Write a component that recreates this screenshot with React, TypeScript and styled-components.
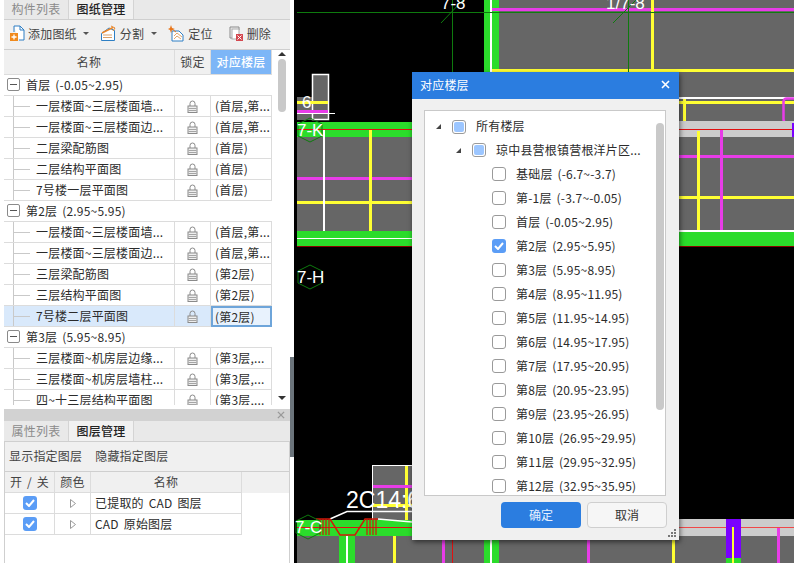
import React from "react";
import styled, { createGlobalStyle } from "styled-components";

const Global = createGlobalStyle`
  html, body { margin: 0; padding: 0; background: #fff; }
  * { box-sizing: border-box; }
  body { font-family: "Noto Sans CJK SC", "Liberation Sans", sans-serif; font-size: 12px; color: #2b2b2b; letter-spacing: .2px; word-spacing: 2px; }
`;

const Page = styled.div`
  position: relative; display: flex; width: 794px; height: 563px; overflow: hidden; background: #fff;
`;
const Side = styled.aside`
  display: flex; flex-direction: column; width: 286px; margin-left: 4px; flex: none;
`;
const Splitter = styled.div`
  width: 4px; flex: none; display: flex; flex-direction: column; padding-top: 357px;
  &::before { content: ""; display: block; height: 100px; background: #6b747b; }
`;
const Tabs = styled.div`
  display: flex; height: ${p => p.$h}px; flex: none; background: #e9e9e9; border-bottom: 1px solid #cfcfcf;
`;
const Tab = styled.div`
  width: 65px; display: flex; align-items: center; justify-content: center; border-right: 1px solid #d4d4d4; padding-bottom: 2px;
  color: ${p => (p.$active ? "#222" : "#8b8b8b")};
  font-weight: ${p => (p.$active ? 500 : 400)};
  background: ${p => (p.$active ? "#f1f1f1" : "transparent")};
`;
const Toolbar = styled.div`
  display: flex; align-items: center; gap: 11px; height: 30px; flex: none; padding: 0 0 2px 5px;
  background: #f0f0f0; border-bottom: 1px solid #cfcfcf; color: #444;
`;
const Tool = styled.div`
  display: flex; align-items: center; gap: ${p => p.$gap || 3}px;
  &:last-child { margin-left: 4px; }
`;
const Caret = styled.span`
  width: 0; height: 0; margin-left: 3px; border: 3px solid transparent; border-top: 3px solid #555; border-bottom: 0;
`;
const TableWrap = styled.div`
  display: flex; height: 355px; flex: none; overflow: hidden; background: #fff;
`;
const Table = styled.div`
  width: 268px; flex: none; display: flex; flex-direction: column;
`;
const Row = styled.div`
  display: grid; grid-template-columns: 171px 36px 61px; height: 21px; flex: none;
  background: ${p => (p.$selected ? "#d9e9fb" : "#fff")};
`;
const HeadRow = styled(Row)`
  height: 25px; background: #f0f0f0;
`;
const HeadCell = styled.div`
  display: flex; align-items: center; justify-content: center; border-right: 1px solid #dcdcdc; border-bottom: 1px solid #dcdcdc; padding-bottom: 2px;
  color: ${p => (p.$accent ? "#fff" : "#444")};
  background: ${p => (p.$accent ? "#7db6f7" : "transparent")};
  font-weight: ${p => (p.$accent ? 500 : 400)};
`;
const GroupRow = styled.div`
  display: flex; align-items: center; gap: 6px; height: 21px; flex: none; padding: 0 0 2px 3px;
  border-bottom: 1px solid #dcdcdc; background: #fff;
`;
const Minus = styled.span`
  width: 13px; height: 13px; flex: none; border: 1px solid #8a8a8a; border-radius: 2px; display: flex; align-items: center; justify-content: center;
  &::before { content: ""; width: 7px; height: 1px; background: #555; }
`;
const NameCell = styled.div`
  display: flex; align-items: center; padding: 0 0 2px 32px; white-space: nowrap; overflow: hidden;
  border-right: 1px solid #dcdcdc; border-bottom: 1px solid #dcdcdc;
  background-image: linear-gradient(#c9c9c9, #c9c9c9), linear-gradient(#c9c9c9, #c9c9c9);
  background-size: 1px 100%, 17px 1px;
  background-position: 9px 0, 9px 10px;
  background-repeat: no-repeat;
`;
const LockCell = styled.div`
  display: flex; align-items: center; justify-content: center; border-right: 1px solid #dcdcdc; border-bottom: 1px solid #dcdcdc;
`;
const FloorCell = styled.div`
  display: flex; align-items: center; padding: 0 0 2px ${p => (p.$focus ? 2 : 4)}px; white-space: nowrap; overflow: hidden;
  border-right: 1px solid #dcdcdc; border-bottom: 1px solid #dcdcdc;
  ${p => p.$focus && "border: 2px solid #6ea5da; padding-bottom: 0; background: #e8f2fd;"}
`;
const VScroll = styled.div`
  width: 18px; flex: none; background: #fff; display: flex; flex-direction: column; align-items: center; padding-left: 2px;
`;
const ArrowUp = styled.span`
  width: 0; height: 0; margin-top: 2px; border: 4px solid transparent; border-bottom: 4px solid #333; border-top: 0;
`;
const ArrowDown = styled.span`
  width: 0; height: 0; margin-top: 284px; border: 4px solid transparent; border-top: 4px solid #333; border-bottom: 0;
`;
const Thumb = styled.span`
  width: 8px; height: 53px; margin-top: 3px; border-radius: 4px; background: #c9c9c9;
`;
const Gap = styled.div`height: 4px; flex: none;`;
const PanelBar = styled.div`
  height: 12px; flex: none; background: #d2d2d2; display: flex; align-items: center; justify-content: flex-end; padding-right: 5px;
`;
const Lower = styled.div`
  flex: 1; background: #fff; border-left: 1px solid #cfcfcf; border-right: 1px solid #cfcfcf;
`;
const LowerBar = styled.div`
  display: flex; align-items: center; gap: 13px; height: 30px; padding: 0 0 2px 4px; background: #f0f0f0; border-bottom: 1px solid #cfcfcf; color: #444;
`;
const LayerGrid = styled.div`
  display: grid; grid-template-columns: 50px 36px 151px; width: 237px;
`;
const LayerHeadBand = styled.div`
  background: #f0f0f0; height: 21px;
`;
const LayerHead = styled.div`
  display: grid; grid-template-columns: 50px 36px 151px; width: 237px; height: 21px; color: #444; border-bottom: 1px solid #dcdcdc;
`;
const LayerHeadCell = styled.div`
  display: flex; align-items: center; justify-content: center; border-right: 1px solid #dcdcdc; padding-bottom: 2px;
`;
const LayerCell = styled.div`
  display: flex; align-items: center; height: 21px; border-right: 1px solid #dcdcdc; border-bottom: 1px solid #dcdcdc;
  justify-content: ${p => (p.$left ? "flex-start" : "center")};
  padding: ${p => (p.$left ? "0 0 2px 4px" : "0")};
`;
const BlueCheck = styled.span`
  width: 14px; height: 14px; border-radius: 3px; background: #5b9df6; display: flex; align-items: center; justify-content: center;
`;
const Canvas = styled.svg`
  flex: 1; height: 563px; display: block; background: #000;
  text { letter-spacing: 0; word-spacing: 0; font-family: "Liberation Sans", sans-serif; fill: #fff; }
`;
const Dialog = styled.section`
  position: absolute; left: 412px; top: 72px; width: 267px; height: 468px; background: #f0f0f0;
  box-shadow: 1px 2px 5px rgba(0,0,0,.55); display: flex; flex-direction: column;
`;
const DialogHead = styled.header`
  height: 27px; flex: none; display: flex; align-items: center; justify-content: space-between; padding: 0 9px 2px 8px;
  background: #2b7de0; color: #fff;
`;
const DialogBody = styled.div`
  flex: 1; display: flex; flex-direction: column; padding: 11px 13px 12px 12px; position: relative;
`;
const ListBox = styled.div`
  height: 386px; flex: none; background: #fff; border: 1px solid #c9c9c9; overflow: hidden; position: relative; padding-top: 4px;
`;
const ListScroll = styled.span`
  position: absolute; right: 1px; top: 12px; width: 8px; height: 287px; border-radius: 4px; background: #c9c9c9;
`;
const TreeRow = styled.div`
  display: flex; align-items: center; height: ${p => p.$h || 24}px; padding-left: ${p => p.$indent}px; white-space: nowrap;
`;
const TreeLabel = styled.span`
  margin-bottom: 2px;
`;
const Tri = styled.span`
  width: 0; height: 0; flex: none; margin-right: 11px; border-left: 5px solid transparent; border-bottom: 5px solid #444;
`;
const Box = styled.span`
  width: 14px; height: 14px; flex: none; margin-right: 10px; border-radius: 3px; display: flex; align-items: center; justify-content: center;
  border: ${p => (p.$checked ? "0" : "1px solid #9a9a9a")};
  background: ${p => (p.$checked ? "#5b9df6" : "#fff")};
  &::before {
    content: ""; display: ${p => (p.$partial ? "block" : "none")}; width: 10px; height: 10px; border-radius: 2px; background: #9cc6ff;
  }
`;
const Actions = styled.div`
  display: flex; justify-content: flex-end; gap: 6px; margin-top: 6px; margin-right: -1px;
`;
const Btn = styled.button`
  width: 80px; height: 26px; border-radius: 4px; font: inherit; padding: 0 0 2px;
  color: ${p => (p.$primary ? "#e6f0ff" : "#333")};
  background: ${p => (p.$primary ? "#2b7de0" : "#f6f6f6")};
  border: ${p => (p.$primary ? "0" : "1px solid #cfcfcf")};
`;
const Grip = styled.svg`
  position: absolute; right: 2px; bottom: 2px;
`;

const Lock = () => (
  <svg width="11" height="13" viewBox="0 0 11 13">
    <path d="M3 6V3.500a2.500 2.500 0 0 1 5 0V6" fill="none" stroke="#8a8a8a" strokeWidth="1" />
    <rect x="1" y="6" width="9" height="6.500" fill="#eee" stroke="#8a8a8a" />
    <path d="M1.500 8.500h8M1.500 10.500h8" stroke="#a5a5a5" />
  </svg>
);
const Close = ({ c = "#fff", s = 9, w = 1.6 }) => (
  <svg width={s} height={s} viewBox="0 0 9 9">
    <path d="M1 1l7 7M8 1l-7 7" stroke={c} strokeWidth={w} />
  </svg>
);
const IconAdd = () => (
  <svg width="16" height="17" viewBox="0 0 16 17">
    <path d="M5 1h6l4 4v10H10" fill="#fff" stroke="#2e7fc4" />
    <path d="M11 1v4h4" fill="none" stroke="#2e7fc4" />
    <path d="M5 1v6" stroke="#2e7fc4" />
    <rect x="1" y="8" width="8" height="8" fill="#f08a1d" />
    <path d="M5 9.500v5M2.500 12h5" stroke="#fff" strokeWidth="1.300" />
  </svg>
);
const IconSplit = () => (
  <svg width="16" height="17" viewBox="0 0 16 17">
    <path d="M1.500 8.500L9 3l5.500 2.500v10H1.500z" fill="#fff" stroke="#2e7fc4" />
    <path d="M3 10h9M3 12.500h9" stroke="#d9a06a" />
    <path d="M2 8l11-5.500" stroke="#e8862a" strokeWidth="1.500" />
    <path d="M11 1l4 2-2 3" fill="none" stroke="#e8862a" />
  </svg>
);
const IconLocate = () => (
  <svg width="16" height="17" viewBox="0 0 16 17">
    <path d="M4 6h7l4 4v6H4z" fill="#fff" stroke="#2e7fc4" />
    <path d="M6 14l3-3 4 3" fill="none" stroke="#e2a56b" />
    <path d="M6 11l3-3 5 4" fill="none" stroke="#e2a56b" />
    <path d="M3 0l1 3 3 1-3 1-1 3-1-3-2-1 2-1z" fill="#e8761a" />
    <path d="M4 4l4 3" stroke="#e8761a" />
  </svg>
);
const IconDelete = () => (
  <svg width="16" height="17" viewBox="0 0 16 17">
    <path d="M2 2h9v3" fill="none" stroke="#8a8a8a" />
    <path d="M2 2v11h4" fill="none" stroke="#8a8a8a" />
    <rect x="4" y="4" width="7" height="10" fill="#fff" stroke="#aaa" />
    <rect x="8" y="9" width="7" height="7" fill="#d4484f" />
    <path d="M9.500 10.500l4 4M13.500 10.500l-4 4" stroke="#fff" />
  </svg>
);

const Check = () => (
  <svg width="10" height="8" viewBox="0 0 10 8">
    <path d="M1 4l3 3 5-6" fill="none" stroke="#fff" strokeWidth="2" />
  </svg>
);

const groups = [
  { title: "首层 (-0.05~2.95)", rows: [
    ["一层楼面~三层楼面墙...", "(首层,第..."],
    ["一层楼面~三层楼面边...", "(首层,第..."],
    ["二层梁配筋图", "(首层)"],
    ["二层结构平面图", "(首层)"],
    ["7号楼一层平面图", "(首层)"],
  ]},
  { title: "第2层 (2.95~5.95)", rows: [
    ["一层楼面~三层楼面墙...", "(首层,第..."],
    ["一层楼面~三层楼面边...", "(首层,第..."],
    ["三层梁配筋图", "(第2层)"],
    ["三层结构平面图", "(第2层)"],
    ["7号楼二层平面图", "(第2层)", true],
  ]},
  { title: "第3层 (5.95~8.95)", rows: [
    ["三层楼面~机房层边缘...", "(第3层,..."],
    ["三层楼面~机房层墙柱...", "(第3层,..."],
    ["四~十三层结构平面图", "(第3层,..."],
  ]},
];

const floors = [
  "基础层 (-6.7~-3.7)", "第-1层 (-3.7~-0.05)", "首层 (-0.05~2.95)", "第2层 (2.95~5.95)",
  "第3层 (5.95~8.95)", "第4层 (8.95~11.95)", "第5层 (11.95~14.95)", "第6层 (14.95~17.95)",
  "第7层 (17.95~20.95)", "第8层 (20.95~23.95)", "第9层 (23.95~26.95)", "第10层 (26.95~29.95)",
  "第11层 (29.95~32.95)", "第12层 (32.95~35.95)",
];

const G = "#2bdc2b", Y = "#ffff33", M = "#e83ce8", W = "#fff", GR = "#666", LG = "#cccccc", R = "#e01010", P = "#7a00ff", DG = "#0e7a0e";
const Hex = ({ x, y, label }: { x: number; y: number; label: string }) => (
  <g>
    <polygon points={`${x},${y - 12} ${x + 12},${y - 6} ${x + 12},${y + 6} ${x},${y + 12} ${x - 12},${y + 6} ${x - 12},${y - 6}`} fill="none" stroke={DG} />
    <text x={x - 13} y={y + 6} fontSize="17">{label}</text>
  </g>
);

const Drawing = () => (
  <Canvas viewBox="294 0 500 563">
    <rect x="499" y="0" width="295" height="122" fill={GR} />
    <rect x="484" y="0" width="15" height="72" fill={G} />
    <rect x="490" y="0" width="2" height="72" fill={W} />
    <rect x="492" y="8" width="302" height="3" fill={M} />
    <rect x="492" y="69" width="302" height="3" fill={Y} />
    <rect x="651" y="0" width="3" height="70" fill={Y} />
    <rect x="297" y="12" width="497" height="1" fill={DG} />
    <rect x="452" y="0" width="1" height="72" fill={DG} />
    <rect x="628" y="0" width="1" height="72" fill={DG} />
    <path d="M441 23L463 0M613 23L636 0" stroke={DG} />
    <text x="441" y="9" fontSize="17">7-8</text>
    <text x="606" y="9" fontSize="17">1/7-8</text>
    <rect x="499" y="97" width="295" height="2" fill={W} />
    <rect x="499" y="101" width="295" height="3" fill={Y} />
    <rect x="683" y="99" width="3" height="22" fill={Y} />
    <rect x="783.500" y="98.500" width="20" height="24" rx="3" fill="none" stroke={M} strokeWidth="2.500" />
    <rect x="499" y="121" width="295" height="16" fill={LG} />
    <rect x="499" y="129" width="295" height="1" fill={R} />
    <rect x="792" y="123" width="2" height="14" fill={P} />
    <rect x="499" y="137" width="295" height="94" fill={GR} />
    <rect x="499" y="155" width="295" height="3" fill={M} />
    <rect x="499" y="196" width="295" height="3" fill={Y} />
    <rect x="697" y="131" width="3" height="100" fill={Y} />
    <rect x="720" y="130" width="3" height="100" fill={M} />
    <rect x="499" y="230" width="295" height="2" fill={W} />
    <rect x="499" y="232" width="295" height="14" fill={G} />
    <rect x="499" y="246" width="295" height="1" fill="#8a0000" />
    <rect x="297" y="97" width="31" height="23" fill={GR} />
    <rect x="312.500" y="74.500" width="16" height="45" fill={GR} stroke={W} strokeWidth="1.500" />
    <rect x="297" y="101" width="31" height="3" fill={Y} />
    <rect x="297" y="110" width="31" height="3" fill={M} />
    <rect x="297" y="113" width="38" height="1" fill={W} />
    <text x="302" y="108" fontSize="17">6</text>
    <rect x="297" y="122" width="202" height="15" fill={G} />
    <rect x="297" y="129" width="202" height="1" fill={R} />
    <rect x="297" y="137" width="202" height="94" fill={GR} />
    <rect x="297" y="177" width="202" height="3" fill={M} />
    <rect x="297" y="201" width="202" height="3" fill={Y} />
    <rect x="323" y="130" width="2" height="108" fill={W} />
    <rect x="369" y="130" width="3" height="108" fill={Y} />
    <rect x="297" y="231" width="202" height="15" fill={G} />
    <rect x="297" y="238" width="202" height="1" fill={W} />
    <rect x="297" y="246" width="202" height="1" fill="#8a0000" />
    <Hex x={310} y={130} label="7-K" />
    <Hex x={310} y={277} label="7-H" />
    <rect x="372.500" y="465.500" width="60" height="60" fill={GR} stroke={W} />
    <rect x="405" y="466" width="3" height="54" fill={Y} />
    <rect x="373" y="485" width="40" height="3" fill={M} />
    <rect x="373" y="504" width="40" height="3" fill={Y} />
    <rect x="297" y="536" width="497" height="27" fill={GR} />
    <rect x="297" y="520" width="202" height="16" fill={G} />
    <rect x="297" y="527" width="202" height="1" fill={R} />
    <rect x="499" y="519" width="295" height="17" fill={LG} />
    <rect x="499" y="527" width="295" height="1" fill="#f04848" />
    <rect x="339" y="536" width="16" height="27" fill={G} />
    <rect x="346" y="536" width="2" height="27" fill={W} />
    <rect x="393" y="536" width="3" height="27" fill={Y} />
    <rect x="442" y="536" width="3" height="27" fill={M} />
    <rect x="452" y="536" width="1" height="27" fill={R} />
    <rect x="484" y="536" width="15" height="27" fill={G} />
    <rect x="490" y="536" width="2" height="27" fill={W} />
    <rect x="587" y="536" width="3" height="27" fill={M} />
    <rect x="672" y="536" width="3" height="27" fill={Y} />
    <rect x="726" y="519" width="15" height="39" fill={P} />
    <rect x="726" y="558" width="15" height="5" fill={G} />
    <rect x="732" y="527" width="2" height="36" fill={Y} />
    <rect x="777" y="528" width="3" height="35" fill={M} />
    <text x="346" y="508" fontSize="23">2C14:6</text>
    <path d="M330 519L347 511.500H412" fill="none" stroke={W} strokeWidth="1.500" />
    <path d="M378 519L412 522" fill="none" stroke={W} strokeWidth="1.500" />
    <path d="M316 519H330L340 535H355L365 519H378" fill="none" stroke="#d01a0a" strokeWidth="1.500" />
    <path d="M320 519V535M323 519V535M326 519V535M329 519V535M367 519V535M370 519V535M373 519V535M376 519V535" stroke="#d01a0a" strokeWidth="1.200" />
    <Hex x={308} y={527} label="7-C" />
  </Canvas>
);

export default function App() {
  return (
    <Page>
      <Global />
      <Side>
        <Tabs $h={20}>
          <Tab>构件列表</Tab>
          <Tab $active>图纸管理</Tab>
        </Tabs>
        <Toolbar>
          <Tool><IconAdd />添加图纸<Caret /></Tool>
          <Tool $gap={4}><IconSplit />分割<Caret /></Tool>
          <Tool $gap={4}><IconLocate />定位</Tool>
          <Tool><IconDelete />删除</Tool>
        </Toolbar>
        <TableWrap>
          <Table>
            <HeadRow>
              <HeadCell>名称</HeadCell>
              <HeadCell>锁定</HeadCell>
              <HeadCell $accent>对应楼层</HeadCell>
            </HeadRow>
            {groups.map(g => (
              <React.Fragment key={g.title}>
                <GroupRow><Minus />{g.title}</GroupRow>
                {g.rows.map(([n, f, sel], i) => (
                  <Row key={i} $selected={!!sel}>
                    <NameCell>{n}</NameCell>
                    <LockCell><Lock /></LockCell>
                    <FloorCell $focus={!!sel}>{f}</FloorCell>
                  </Row>
                ))}
              </React.Fragment>
            ))}
          </Table>
          <VScroll>
            <ArrowUp />
            <Thumb />
            <ArrowDown />
          </VScroll>
        </TableWrap>
        <Gap />
        <PanelBar><Close c="#999" s={8} w={1.500} /></PanelBar>
        <Tabs $h={21}>
          <Tab>属性列表</Tab>
          <Tab $active>图层管理</Tab>
        </Tabs>
        <Lower>
          <LowerBar><span>显示指定图层</span><span>隐藏指定图层</span></LowerBar>
          <LayerHeadBand>
            <LayerHead>
              <LayerHeadCell>开 / 关</LayerHeadCell>
              <LayerHeadCell>颜色</LayerHeadCell>
              <LayerHeadCell>名称</LayerHeadCell>
            </LayerHead>
          </LayerHeadBand>
          <LayerGrid>
            {["已提取的 CAD 图层", "CAD 原始图层"].map(n => (
              <React.Fragment key={n}>
                <LayerCell><BlueCheck><Check /></BlueCheck></LayerCell>
                <LayerCell>
                  <svg width="6" height="9" viewBox="0 0 6 9"><path d="M.5.500l5 4-5 4z" fill="#fff" stroke="#999" /></svg>
                </LayerCell>
                <LayerCell $left>{n}</LayerCell>
              </React.Fragment>
            ))}
          </LayerGrid>
        </Lower>
      </Side>
      <Splitter />
      <Drawing />
      <Dialog>
        <DialogHead>对应楼层<Close /></DialogHead>
        <DialogBody>
          <ListBox>
            <TreeRow $indent={11} $h={23}><Tri /><Box $partial /><TreeLabel>所有楼层</TreeLabel></TreeRow>
            <TreeRow $indent={31}><Tri /><Box $partial /><TreeLabel>琼中县营根镇营根洋片区...</TreeLabel></TreeRow>
            {floors.map((f, i) => (
              <TreeRow key={f} $indent={67}>
                <Box $checked={i === 3}>{i === 3 && <Check />}</Box><TreeLabel>{f}</TreeLabel>
              </TreeRow>
            ))}
            <ListScroll />
          </ListBox>
          <Actions>
            <Btn $primary>确定</Btn>
            <Btn>取消</Btn>
          </Actions>
        </DialogBody>
        <Grip width="9" height="9" viewBox="0 0 9 9">
          <path d="M6 0h2v2H6zM3 3h2v2H3zM6 3h2v2H6zM0 6h2v2H0zM3 6h2v2H3zM6 6h2v2H6z" fill="#777" />
        </Grip>
      </Dialog>
    </Page>
  );
}
